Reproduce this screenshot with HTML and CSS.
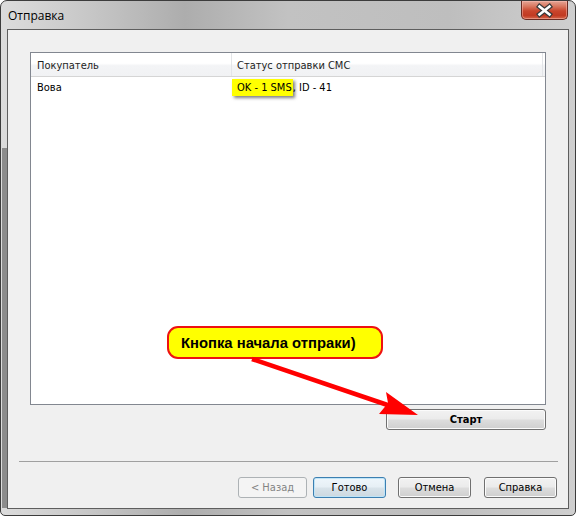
FILE: index.html
```html
<!DOCTYPE html>
<html lang="ru">
<head>
<meta charset="utf-8">
<title>Отправка</title>
<link rel="stylesheet" href="styles.css">
</head>
<body>
<div class="window">
  <div class="titlebar">
    <span class="title">Отправка</span>
    <div class="close">
      <svg width="47" height="19" viewBox="0 0 47 19">
        <path d="M18.5 5.5 L28.5 13.5 M28.5 5.5 L18.5 13.5" stroke="#3a3a3a" stroke-width="5" stroke-linecap="square" fill="none"/>
        <path d="M18.5 5.5 L28.5 13.5 M28.5 5.5 L18.5 13.5" stroke="#ffffff" stroke-width="2.6" stroke-linecap="square" fill="none"/>
      </svg>
    </div>
  </div>
  <div class="client">
    <div class="list">
      <div class="list-header">
        <div class="hcol hcol1">Покупатель</div>
        <div class="hcol hcol2">Статус отправки СМС</div>
        <div class="hcol hrest"></div>
      </div>
      <div class="row">
        <div class="cell cell1">Вова</div>
        <div class="cell cell2"><span class="hl">OK - 1 SMS</span>, ID - 41</div>
      </div>
    </div>
    <div class="start-row">
      <button class="btn btn-start">Старт</button>
    </div>
    <div class="sep"></div>
    <div class="buttons">
      <button class="btn btn-back" disabled>&lt; Назад</button>
      <button class="btn btn-ok">Готово</button>
      <button class="btn btn-cancel">Отмена</button>
      <button class="btn btn-help">Справка</button>
    </div>
  </div>
  <div class="callout">Кнопка начала отпраки)</div>
  <svg class="arrow" width="576" height="516" viewBox="0 0 576 516">
    <line x1="252" y1="359" x2="392" y2="406.5" stroke="#ff0000" stroke-width="4.5"/>
    <polygon points="418,415 386,392 388,403 379,414" fill="#ff0000"/>
  </svg>
</div>
</body>
</html>
```

FILE: styles.css
```css
html, body {
  margin: 0;
  padding: 0;
  background: #ffffff;
}

.window {
  position: relative;
  width: 576px;
  height: 516px;
  box-sizing: border-box;
  border: 1px solid #3c3c3c;
  border-radius: 7px 7px 5px 5px;
  background:
    linear-gradient(#8c8c8c, #8c8c8c) 1px 147px / 5px 360px no-repeat,
    linear-gradient(to right, #dcdcdc 0%, #c9c9c9 14%, #adadad 32%, #c2c2c2 50%, #bebebe 78%, #cfcfcf 100%);
  display: flex;
  flex-direction: column;
  overflow: hidden;
  font-family: "DejaVu Sans Condensed", "Liberation Sans", Arial, sans-serif;
  font-size: 11px;
  color: #000;
}

.titlebar {
  height: 28px;
  flex: none;
  display: flex;
  align-items: center;
  padding-left: 7px;
}

.title {
  font-family: "Open Sans", "Noto Sans", sans-serif;
  font-size: 12px;
  color: #000;
  margin-top: 1px;
}

.close {
  position: absolute;
  left: 520px;
  top: 0;
  width: 47px;
  height: 19px;
  box-sizing: border-box;
  border: 1px solid #6a2b22;
  border-top: none;
  border-radius: 0 0 5px 5px;
  background: linear-gradient(#e5a596 0%, #d9775f 30%, #c9452c 55%, #c23a22 80%, #d5674a 100%);
  box-shadow: inset 0 0 0 1px rgba(255, 200, 190, 0.45);
}

.close svg {
  position: absolute;
  left: -1px;
  top: 0;
}

.client {
  flex: 1;
  margin: 0 6px 6px 6px;
  border: 1px solid #5e5e5e;
  background: #f0f0f0;
  display: flex;
  flex-direction: column;
  padding: 22px 0 10px 0;
}

.list {
  margin-left: 22px;
  width: 516px;
  height: 353px;
  box-sizing: border-box;
  border: 1px solid #828790;
  background: #ffffff;
  flex: none;
}

.list-header {
  display: flex;
  height: 23px;
  border-bottom: 1px solid #d5d5d5;
  background: linear-gradient(#ffffff 0%, #ffffff 45%, #f3f4f6 55%, #f1f2f4 100%);
}

.hcol {
  box-sizing: border-box;
  display: flex;
  align-items: center;
  color: #1e1e1e;
  padding-top: 2px;
}

.hcol1 {
  width: 201px;
  padding-left: 6px;
  border-right: 1px solid #e3e5e8;
}

.hcol2 {
  width: 311px;
  padding-left: 5px;
  border-right: 1px solid #e3e5e8;
}

.hrest {
  flex: 1;
}

.row {
  display: flex;
  height: 21px;
  align-items: center;
}

.cell1 {
  width: 201px;
  padding-left: 6px;
  box-sizing: border-box;
}

.cell2 {
  padding-left: 5px;
}

.hl {
  background: #ffff00;
  padding: 2px 1px 2px 5px;
  margin-left: -5px;
  box-shadow: 2px 2px 3px rgba(0, 0, 0, 0.5);
}

.start-row {
  margin-top: 4px;
  margin-left: 22px;
  width: 516px;
  display: flex;
  justify-content: flex-end;
  flex: none;
}

.btn {
  font-family: "DejaVu Sans Condensed", "Liberation Sans", Arial, sans-serif;
  font-size: 11px;
  color: #000;
  height: 21px;
  box-sizing: border-box;
  border: 1px solid #707070;
  border-radius: 3px;
  background: linear-gradient(#f2f2f2 0%, #ebebeb 48%, #dddddd 52%, #cfcfcf 100%);
  box-shadow: inset 0 0 0 1px #fbfbfb;
  padding: 0;
  margin: 0;
}

.btn-start {
  width: 160px;
  font-weight: bold;
  font-size: 11px;
}

.sep {
  height: 1px;
  background: #a0a0a0;
  margin: 31px 10px 0 11px;
  flex: none;
}

.buttons {
  margin-top: 15px;
  display: flex;
  justify-content: flex-end;
  padding-right: 11px;
  flex: none;
}

.btn-back {
  width: 69px;
  margin-right: 6px;
  color: #838383;
  border-color: #adb2b5;
  background: #f4f4f4;
  box-shadow: none;
}

.btn-ok {
  width: 73px;
  margin-right: 12px;
  border-color: #3c7fb1;
  box-shadow: inset 0 0 0 1px #bfe4f7;
  background: linear-gradient(#eef6fb 0%, #e6eff5 48%, #d8e3ea 52%, #ccd8e0 100%);
}

.btn-cancel {
  width: 73px;
  margin-right: 13px;
}

.btn-help {
  width: 73px;
}

.callout {
  position: absolute;
  left: 166px;
  top: 325px;
  width: 216px;
  height: 33px;
  box-sizing: border-box;
  border: 2px solid #ee1111;
  border-radius: 11px;
  background: #ffff00;
  font-family: "Liberation Sans", Arial, sans-serif;
  font-weight: bold;
  font-size: 14.8px;
  display: flex;
  align-items: center;
  padding-left: 12px;
  padding-top: 1px;
}

.arrow {
  position: absolute;
  left: -1px;
  top: -1px;
  pointer-events: none;
}
```
